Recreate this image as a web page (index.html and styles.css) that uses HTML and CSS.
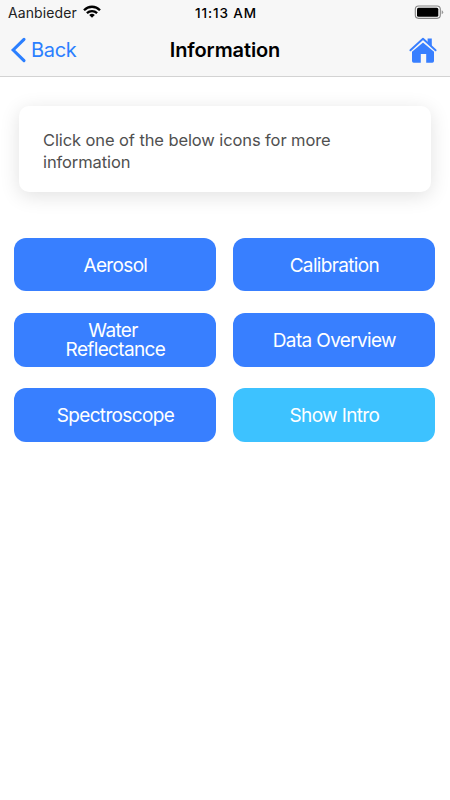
FILE: index.html
```html
<!DOCTYPE html>
<html lang="en">
<head>
<meta charset="utf-8">
<title>Information</title>
<link rel="stylesheet" href="styles.css">
</head>
<body>
<header class="top">
  <div class="status">
    <div class="carrier"><span>Aanbieder</span>
      <svg class="wifi" width="18" height="14" viewBox="0 0 18 14" fill="none" stroke="#000" stroke-width="2.3"><path d="M1 5.2C5.5.6 12.500.6 17 5.200M3.900 8.200C6.800 5.400 11.200 5.400 14.100 8.200"/><path d="M9 12.700 6.200 9.900Q9 7.700 11.800 9.900Z" fill="#000" stroke="none"/></svg>
    </div>
    <div class="clock">11:13 AM</div>
    <svg class="battery" width="30" height="15" viewBox="0 0 30 15"><rect x="1.300" y="1" width="25" height="12.400" rx="3.300" fill="none" stroke="#858585" stroke-width="1.100"/><rect x="3" y="2.800" width="21.300" height="8.900" rx="1.500"/><path d="M27.700 5.200Q29.200 5.600 29.200 7.200T27.700 9.200Z" fill="#999"/></svg>
  </div>
  <nav class="nav">
    <a class="back"><svg width="17" height="26" viewBox="0 0 17 26" fill="none" stroke="#2b7fff" stroke-width="3.100" stroke-linecap="round" stroke-linejoin="miter"><path d="M14 2.400 3.200 13 14 23.600"/></svg><span>Back</span></a>
    <h1 class="title">Information</h1>
    <a class="home" aria-label="Home"><svg width="28" height="27" viewBox="0 0 28 27" fill="#387fff"><path d="M3 13.500 14 3.500l11 10V24q0 1.700-1.700 1.700h-6.100V17h-5.400v8.700H4.700Q3 25.700 3 24z"/><path d="M1.400 13.600 14 2.900 26.600 13.600" fill="none" stroke="#f7f7f7" stroke-width="4"/><path d="M1.400 13.300 14 1.700 26.600 13.300" fill="none" stroke="#387fff" stroke-width="1.900" stroke-linecap="round" stroke-linejoin="round"/><path d="M18.600 1.600h4.200v8l-4.200-4z"/></svg></a>
  </nav>
</header>
<main>
  <p class="card">Click one of the below icons for more information</p>
  <div class="grid">
    <button>Aerosol</button>
    <button>Calibration</button>
    <button class="two-line">Water&nbsp;<br>Reflectance</button>
    <button>Data Overview</button>
    <button>Spectroscope</button>
    <button class="intro">Show Intro</button>
  </div>
</main>
</body>
</html>
```
FILE: styles.css
```css
* { box-sizing: border-box; }
body {
  margin: 0;
  min-height: 800px;
  background: #fff;
  font-family: Inter, "Liberation Sans", sans-serif;
}
.top {
  height: 77px;
  background: #f7f7f7;
  border-bottom: 1px solid #d3d3d3;
}
.status {
  display: grid;
  grid-template-columns: 1fr auto 1fr;
  height: 24px;
  padding: 0 6px 0 8px;
  align-items: center;
  font-size: 14px;
}
.carrier { display: flex; align-items: center; gap: 6px; letter-spacing: .1px; color: #222; }
.clock { padding-top: 1px; font-size: 13.500px; font-weight: 500; letter-spacing: .9px; }
.battery { justify-self: end; }
.nav {
  display: grid;
  grid-template-columns: 1fr auto 1fr;
  height: 52px;
  padding: 0 13px 0 11px;
  align-items: center;
}
.back { display: flex; align-items: center; gap: 4px; font-size: 20px; letter-spacing: -.3px; color: #2b7fff; }
.back svg { margin-left: -1px; }
.title { margin: 0; padding-left: 2px; font-size: 20px; font-weight: 600; letter-spacing: -.1px; }
.home { justify-self: end; height: 27px; }
.card {
  margin: 29px 19px 0;
  height: 86px;
  padding: 24px 24px;
  border-radius: 10px;
  box-shadow: 0 4px 20px rgba(0, 0, 0, .12);
  color: #505050;
  font-size: 16.500px;
  letter-spacing: -.1px;
  line-height: 21.500px;
}
.grid {
  display: grid;
  grid-template-columns: 202px 202px;
  grid-auto-rows: 53.800px;
  gap: 21.500px 17px;
  margin: 45.600px 14.400px 0;
}
button {
  padding: 2px 0 0;
  border: 0;
  border-radius: 12px;
  background: #387fff;
  color: #fff;
  font: 400 19px/19.500px Inter, "Liberation Sans", sans-serif;
  letter-spacing: -.65px;
}
.two-line { padding-top: 1px; }
.intro { background: #3dc2ff; }
```
